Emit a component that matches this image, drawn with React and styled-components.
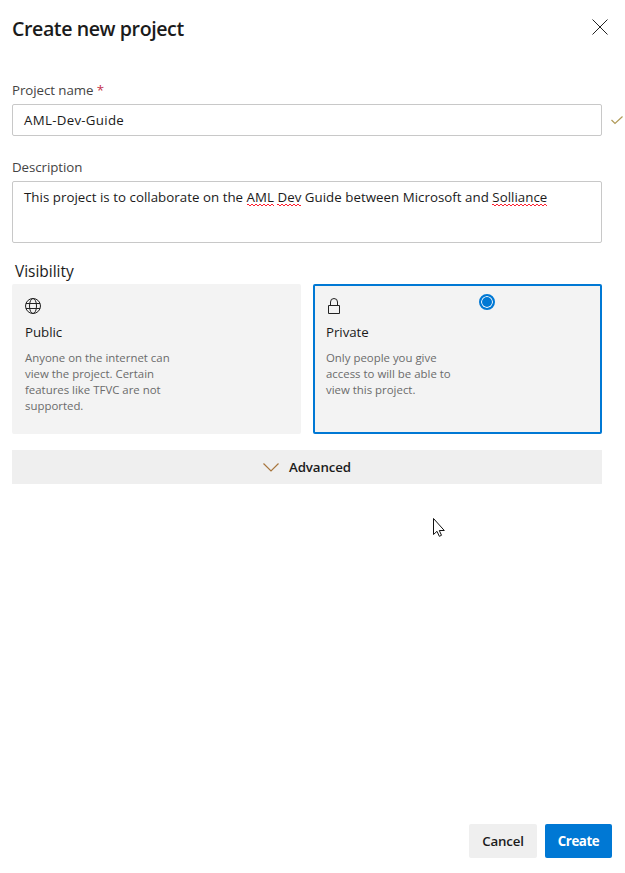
import React from "react";
import styled, { createGlobalStyle } from "styled-components";

const GlobalStyle = createGlobalStyle`
  * { box-sizing: border-box; }
  body { margin: 0; background: #fff; }
`;

const Panel = styled.main`
  position: relative;
  display: flex;
  flex-direction: column;
  height: 873px;
  padding: 12px 13px 15px 12px;
  overflow: hidden;
  color: #1b1b1b;
  font: 13.3px/20px "Open Sans", "Noto Sans", sans-serif;
`;

const Header = styled.header`
  display: flex;
  justify-content: space-between;
  height: 68px;
`;

const Title = styled.h1`
  margin: 0;
  font-size: 19.6px;
  line-height: 34px;
  font-weight: 600;
  letter-spacing: -0.42px;
`;

const CloseButton = styled.button`
  display: flex;
  width: 24px;
  height: 30px;
  padding: 0;
  border: 0;
  background: none;
  align-items: center;
  justify-content: center;
`;

const Label = styled.label`
  display: block;
  height: 24px;
  color: #444;
  line-height: 20px;
  letter-spacing: -0.06px;
`;

const Required = styled.span`
  color: #c4314b;
`;

const FieldRow = styled.div`
  display: flex;
  align-items: center;
  gap: 9px;
  margin: 0 -13px 21px 0;
`;

const FieldBox = styled.div`
  flex: none;
  width: 590px;
  height: ${(p) => p.$height};
  padding: 5px 11px;
  border: 1px solid #c8c8c8;
  border-radius: 2px;
  letter-spacing: ${(p) => p.$spacing || "0"};
  white-space: nowrap;
`;

const Misspelled = styled.span`
  padding-bottom: 1px;
  background:
    repeating-linear-gradient(90deg, #ff2030 0 2px, transparent 2px 4px) 0 calc(100% - 2px) / 100% 1px no-repeat,
    repeating-linear-gradient(90deg, transparent 0 2px, #ff2030 2px 4px) 0 calc(100% - 1px) / 100% 1px no-repeat;
`;

const Heading = styled.h2`
  height: 20px;
  margin: 18px 0 3px 3px;
  font-size: 15.5px;
  font-weight: 400;
  line-height: 21px;
  letter-spacing: -0.02px;
`;

const Cards = styled.div`
  display: grid;
  grid-template-columns: 289px 289px;
  gap: 12px;
`;

const Card = styled.section`
  display: flex;
  height: 150px;
  padding: 10px 11px;
  justify-content: space-between;
  border: 2px solid ${(p) => (p.$selected ? "#0078d4" : "#f3f3f3")};
  border-radius: 2px;
  background: #f3f3f3;
`;

const CardBody = styled.div`
  width: 153px;
`;

const CardIcon = styled.div`
  height: 26px;
`;

const CardTitle = styled.div`
  height: 28px;
  line-height: 20px;
  letter-spacing: -0.05px;
`;

const CardText = styled.p`
  margin: 0;
  color: #6b6b6b;
  font-size: 11.42px;
  line-height: 16px;
  white-space: pre-line;
`;

const Radio = styled.span`
  width: 16px;
  height: 16px;
  margin: -2px 94px 0 0;
  border: 2px solid #0078d4;
  border-radius: 50%;
  background: #0078d4;
  box-shadow: inset 0 0 0 1px #fff;
`;

const Advanced = styled.button`
  display: flex;
  width: 590px;
  height: 34px;
  margin-top: 16px;
  padding: 0;
  align-items: center;
  justify-content: center;
  gap: 10px;
  border: 0;
  background: #efefef;
  color: #1b1b1b;
  font: inherit;
  font-weight: 600;
  letter-spacing: -0.1px;
`;

const Footer = styled.footer`
  display: flex;
  margin-top: auto;
  justify-content: flex-end;
  gap: 8px;
`;

const Button = styled.button`
  width: ${(p) => p.$width};
  height: 34px;
  padding: 0;
  border: 0;
  border-radius: 2px;
  background: ${(p) => (p.$primary ? "#0078d4" : "#efefef")};
  color: ${(p) => (p.$primary ? "#fff" : "#1b1b1b")};
  font: inherit;
  font-weight: ${(p) => (p.$primary ? 700 : 600)};
  letter-spacing: ${(p) => (p.$primary ? "-0.4px" : "-0.15px")};
`;

const Pointer = styled.svg`
  position: absolute;
  left: 432px;
  top: 517px;
`;

const Icon = styled.svg`
  display: block;
  flex: none;
  fill: none;
  stroke: ${(p) => p.$color || "#222"};
  stroke-width: ${(p) => p.$weight || 1};
`;

export default function App() {
  return (
    <>
      <GlobalStyle />
      <Panel>
        <Header>
          <Title>Create new project</Title>
          <CloseButton aria-label="Close">
            <Icon width="16" height="16"><path d="M.5.5l15 15M15.5.5l-15 15" /></Icon>
          </CloseButton>
        </Header>

        <Label>Project name <Required>*</Required></Label>
        <FieldRow>
          <FieldBox $height="32px" $spacing="0.28px">AML-Dev-Guide</FieldBox>
          <Icon width="12" height="9" $color="#b09a58" $weight="1.2"><path d="M.5 4l3.5 3.5L11.5.5" /></Icon>
        </FieldRow>

        <Label>Description</Label>
        <FieldBox $height="62px" $spacing="0.03px">
          This project is to collaborate on the <Misspelled>AML</Misspelled>{" "}
          <Misspelled>Dev</Misspelled> Guide between Microsoft and <Misspelled>Solliance</Misspelled>
        </FieldBox>

        <Heading>Visibility</Heading>
        <Cards>
          <Card>
            <CardBody>
              <CardIcon>
                <Icon width="16" height="20" viewBox="0 -2 16 20">
                  <circle cx="8" cy="8" r="7.5" />
                  <ellipse cx="8" cy="8" rx="3.5" ry="7.5" />
                  <path d="M1 5.5h14M1 10.5h14" />
                </Icon>
              </CardIcon>
              <CardTitle>Public</CardTitle>
              <CardText>{"Anyone on the internet can\nview the project. Certain\nfeatures like TFVC are not\nsupported."}</CardText>
            </CardBody>
          </Card>
          <Card $selected>
            <CardBody>
              <CardIcon>
                <Icon width="16" height="20" viewBox="0 -2 16 20">
                  <path d="M2.5 7.5h11v8h-11zM4.5 7.5V4a3.5 3.5 0 0 1 7 0v3.5" />
                </Icon>
              </CardIcon>
              <CardTitle>Private</CardTitle>
              <CardText>{"Only people you give\naccess to will be able to\nview this project."}</CardText>
            </CardBody>
            <Radio />
          </Card>
        </Cards>

        <Advanced>
          <Icon width="16" height="9" $color="#a8763e" $weight="1.2"><path d="M.5.5L8 8 15.5.5" /></Icon>
          Advanced
        </Advanced>

        <Footer>
          <Button $width="68px">Cancel</Button>
          <Button $width="67px" $primary>Create</Button>
        </Footer>

        <Pointer width="14" height="22">
          <path d="M1.5 1.5v16l3.5-3.2 2.3 5 2.2-1-2.2-4.8h5z" fill="#fff" stroke="#111" />
        </Pointer>
      </Panel>
    </>
  );
}
